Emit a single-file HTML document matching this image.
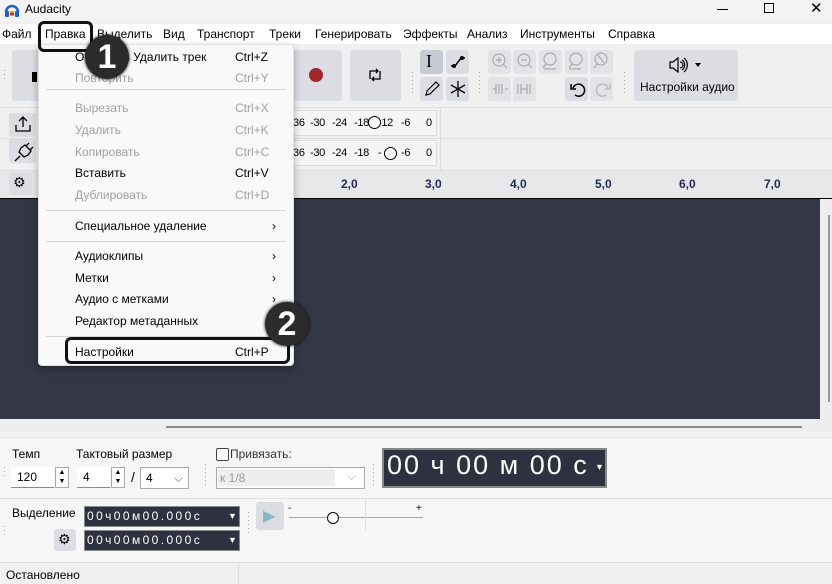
<!DOCTYPE html>
<html><head><meta charset="utf-8"><style>
*{margin:0;padding:0;box-sizing:border-box}
body{width:832px;height:584px;overflow:hidden;background:#f0f0f0;font-family:"Segoe UI","Liberation Sans","DejaVu Sans",sans-serif;font-size:12px;color:#000;position:relative}
.a{position:absolute}
.btn{position:absolute;background:#dcdde2;border-radius:3px}
.mi{position:absolute;left:75px;font-size:12px;color:#000}
.sc{position:absolute;left:235px;font-size:12px}
.dis{color:#a0a0a0}
.sep{position:absolute;left:46px;width:240px;height:1px;background:#d8d8d8}
.arr{position:absolute;left:272px;font-size:12px}
.grip{position:absolute;width:4px;color:#999;font-size:9px;line-height:4px}
.dark{background:#2e3140;color:#fff;border:1px solid #888}
.m{position:absolute;font-size:11px;letter-spacing:-.3px}
</style></head><body>
<!-- title bar -->
<div class="a" style="left:0;top:0;width:832px;height:22px;background:#f3f3f3"></div>
<svg class="a" style="left:4px;top:2px" width="16" height="16"><path d="M2 10 A6 6 0 0 1 14 10" stroke="#1f5fcf" stroke-width="2.5" fill="none"/><rect x="1" y="9" width="4" height="6" rx="1" fill="#1f5fcf"/><rect x="11" y="9" width="4" height="6" rx="1" fill="#1f5fcf"/><rect x="6" y="9" width="4" height="5" fill="#f5a000"/><rect x="6" y="11" width="4" height="2" fill="#e02020"/></svg>
<div class="a" style="left:25px;top:2px;font-size:12px">Audacity</div>
<div class="a" style="left:717px;top:9px;width:11px;height:1px;background:#000"></div>
<div class="a" style="left:764px;top:3px;width:10px;height:10px;border:1px solid #000"></div>
<div class="a" style="left:810px;top:-1px;font-size:15px">✕</div>
<!-- menu bar -->
<div class="a" style="left:0;top:24px;width:832px;height:20px;background:#fff"></div>
<div class="a" style="left:2px;top:27px">Файл</div>
<div class="a" style="left:45px;top:27px">Правка</div>
<div class="a" style="left:97px;top:27px">Выделить</div>
<div class="a" style="left:163px;top:27px">Вид</div>
<div class="a" style="left:197px;top:27px">Транспорт</div>
<div class="a" style="left:269px;top:27px">Треки</div>
<div class="a" style="left:315px;top:27px">Генерировать</div>
<div class="a" style="left:403px;top:27px">Эффекты</div>
<div class="a" style="left:467px;top:27px">Анализ</div>
<div class="a" style="left:520px;top:27px">Инструменты</div>
<div class="a" style="left:608px;top:27px">Справка</div>
<!-- toolbar -->
<div class="grip" style="left:3px;top:68px">·<br>·<br>·</div>
<div class="btn" style="left:12px;top:50px;width:30px;height:51px"></div>
<div class="a" style="left:32px;top:72px;width:5px;height:10px;background:#000"></div>
<div class="btn" style="left:290px;top:50px;width:52px;height:51px"></div>
<div class="a" style="left:309px;top:68px;width:14px;height:14px;border-radius:50%;background:#a0262a"></div>
<div class="btn" style="left:350px;top:50px;width:51px;height:51px"></div>
<svg class="a" style="left:367px;top:67px" width="16" height="16" fill="none" stroke="#000" stroke-width="1.3"><path d="M3 12V4h8M9 2l2 2-2 2M13 4v8H5M7 14l-2-2 2-2"/></svg>
<div class="grip" style="left:411px;top:70px">· ·<br>· ·<br>· ·</div>
<div class="btn" style="left:420px;top:50px;width:23px;height:24px;background:#c8cad3"></div>
<div class="a" style="left:426px;top:51px;font-size:18px;font-family:'Liberation Serif'">I</div>
<div class="btn" style="left:446px;top:50px;width:23px;height:24px"></div>
<svg class="a" style="left:448px;top:53px" width="20" height="18"><path d="M3 13h4l6-8h4" stroke="#000" fill="none" stroke-width="1.5"/><circle cx="6" cy="13" r="2"/><circle cx="14" cy="5" r="2"/></svg>
<div class="btn" style="left:420px;top:77px;width:23px;height:24px"></div>
<svg class="a" style="left:424px;top:80px" width="16" height="17" fill="none" stroke="#000" stroke-width="1.2"><path d="M2 15l1-4 9-9 3 3-9 9z"/></svg>
<div class="btn" style="left:446px;top:77px;width:23px;height:24px"></div>
<svg class="a" style="left:449px;top:80px" width="18" height="18" stroke="#000" stroke-width="1.3"><path d="M9 1v16M2 5l14 8M16 5L2 13"/></svg>
<div class="grip" style="left:478px;top:70px">· ·<br>· ·<br>· ·</div>
<div class="btn" style="left:488px;top:50px;width:23px;height:24px;opacity:.7"></div>
<div class="btn" style="left:513px;top:50px;width:23px;height:24px;opacity:.7"></div>
<div class="btn" style="left:539px;top:50px;width:23px;height:24px;opacity:.7"></div>
<div class="btn" style="left:565px;top:50px;width:23px;height:24px;opacity:.7"></div>
<div class="btn" style="left:590px;top:50px;width:23px;height:24px;opacity:.7"></div>
<div class="btn" style="left:488px;top:77px;width:23px;height:24px;opacity:.7"></div>
<div class="btn" style="left:513px;top:77px;width:23px;height:24px;opacity:.7"></div>
<div class="btn" style="left:565px;top:77px;width:23px;height:24px"></div>
<div class="btn" style="left:590px;top:77px;width:23px;height:24px;opacity:.7"></div>
<svg class="a" style="left:488px;top:50px" width="126" height="24" fill="none" stroke="#aaa" stroke-width="1.2">
<circle cx="11" cy="10" r="6"/><path d="M15 14l4 4M8 10h6M11 7v6"/>
<circle cx="36" cy="10" r="6"/><path d="M40 14l4 4M33 10h6"/>
<circle cx="62" cy="9" r="6"/><path d="M58 14l-3 4M56 19h12"/>
<circle cx="88" cy="9" r="6"/><path d="M84 14l-3 4M81 19h12"/>
<circle cx="113" cy="9" r="6"/><path d="M109 14l-3 4M110 5l6 8"/>
</svg>
<svg class="a" style="left:488px;top:77px" width="50" height="24" fill="none" stroke="#aaa" stroke-width="1.2"><path d="M5 12h3M8 7v10M11 7v10M14 7v10M17 12h3M30 7v10M33 7v10M33 12h6M39 7v10M42 7v10"/></svg>
<svg class="a" style="left:569px;top:80px" width="18" height="18" fill="none" stroke="#000" stroke-width="1.5"><path d="M4 8a6 6 0 1 1 2 7"/><path d="M2 4v5h5" /></svg>
<svg class="a" style="left:594px;top:80px" width="18" height="18" fill="none" stroke="#bbb" stroke-width="1.5"><path d="M14 8a6 6 0 1 0-2 7"/><path d="M16 4v5h-5"/></svg>
<div class="grip" style="left:623px;top:70px">· ·<br>· ·<br>· ·</div>
<div class="btn" style="left:634px;top:50px;width:104px;height:51px"></div>
<svg class="a" style="left:668px;top:56px" width="36" height="18" fill="none" stroke="#000" stroke-width="1.2"><path d="M2 6h3l5-4v14l-5-4H2z"/><path d="M12 6a3 3 0 0 1 0 6M14 4a6 6 0 0 1 0 10M16 2a9 9 0 0 1 0 14"/><path d="M27 7h6l-3 4z" fill="#000" stroke="none"/></svg>
<div class="a" style="left:640px;top:80px;font-size:12px">Настройки аудио</div>
<div class="a" style="left:0;top:107px;width:832px;height:1px;background:#ddd"></div>
<!-- meters -->
<div class="grip" style="left:8px;top:136px">·<br>·<br>·</div>
<div class="btn" style="left:9px;top:113px;width:27px;height:24px"></div>
<svg class="a" style="left:13px;top:114px" width="20" height="20" fill="none" stroke="#000" stroke-width="1.3"><path d="M10 13V3M6 7l4-4 4 4M3 11v6h14v-6"/></svg>
<div class="btn" style="left:9px;top:139px;width:27px;height:24px"></div>
<svg class="a" style="left:13px;top:141px" width="22" height="22" fill="none" stroke="#000" stroke-width="1.3"><path d="M2 20l5-5M6 11l5 5 4-2 3-4-6-6-4 3zM13 5l3-3M17 9l3-3"/></svg>
<div class="a" style="left:293px;top:110px;width:144px;height:26px;border:1px solid #ddd;background:#f5f5f5"></div>
<div class="a" style="left:293px;top:140px;width:144px;height:26px;border:1px solid #ddd;background:#f5f5f5"></div>
<div class="m" style="left:293px;top:117px">36</div><div class="m" style="left:310px;top:117px">-30</div><div class="m" style="left:332px;top:117px">-24</div><div class="m" style="left:354px;top:117px">-18</div><div class="m" style="left:378px;top:117px">-12</div><div class="m" style="left:401px;top:117px">-6</div><div class="m" style="left:426px;top:117px">0</div>
<div class="m" style="left:293px;top:147px">36</div><div class="m" style="left:310px;top:147px">-30</div><div class="m" style="left:332px;top:147px">-24</div><div class="m" style="left:354px;top:147px">-18</div><div class="m" style="left:378px;top:147px">-</div><div class="m" style="left:401px;top:147px">-6</div><div class="m" style="left:426px;top:147px">0</div>
<div class="a" style="left:368px;top:116px;width:13px;height:13px;border-radius:50%;border:1px solid #000;background:#fff"></div>
<div class="a" style="left:384px;top:147px;width:13px;height:13px;border-radius:50%;border:1px solid #000;background:#fff"></div>
<div class="a" style="left:440px;top:108px;width:1px;height:62px;background:#ddd"></div>
<div class="a" style="left:0;top:138px;width:832px;height:1px;background:#ddd"></div>
<!-- ruler -->
<div class="a" style="left:0;top:170px;width:832px;height:29px;background:#e8e8ea;border-top:1px solid #ddd"></div>
<div class="btn" style="left:9px;top:172px;width:23px;height:23px"></div>
<div class="a" style="left:13px;top:174px;font-size:14px">⚙</div>
<div class="a" style="left:0;top:198px;width:832px;height:1px;background:#000"></div>
<div class="a" style="left:341px;top:177px;font-size:12px;font-weight:bold;color:#1a2a5a">2,0</div>
<div class="a" style="left:425px;top:177px;font-size:12px;font-weight:bold;color:#1a2a5a">3,0</div>
<div class="a" style="left:510px;top:177px;font-size:12px;font-weight:bold;color:#1a2a5a">4,0</div>
<div class="a" style="left:595px;top:177px;font-size:12px;font-weight:bold;color:#1a2a5a">5,0</div>
<div class="a" style="left:679px;top:177px;font-size:12px;font-weight:bold;color:#1a2a5a">6,0</div>
<div class="a" style="left:764px;top:177px;font-size:12px;font-weight:bold;color:#1a2a5a">7,0</div>
<!-- track area -->
<div class="a" style="left:0;top:199px;width:820px;height:220px;background:#343746"></div>
<div class="a" style="left:820px;top:199px;width:12px;height:233px;background:#eee"></div>
<div class="a" style="left:828px;top:215px;width:2px;height:187px;background:#999"></div>
<div class="a" style="left:0;top:419px;width:820px;height:13px;background:#eee"></div>
<div class="a" style="left:166px;top:426px;width:636px;height:2px;background:#888"></div>
<!-- bottom toolbars -->
<div class="a" style="left:0;top:437px;width:832px;height:1px;background:#e6e6e6"></div>
<div class="a" style="left:0;top:438px;width:832px;height:124px;background:#f6f6f6"></div>
<div class="grip" style="left:3px;top:465px">·<br>·<br>·</div>
<div class="a" style="left:12px;top:447px">Темп</div>
<div class="a" style="left:76px;top:447px">Тактовый размер</div>
<div class="a" style="left:11px;top:467px;width:43px;height:21px;background:#fff;border-bottom:1px solid #888;padding:3px 6px">120</div>
<div class="a" style="left:55px;top:467px;width:14px;height:21px;border:1px solid #aaa;background:#fff;font-size:7px;text-align:center;line-height:9px">▲<br>▼</div>
<div class="a" style="left:77px;top:467px;width:33px;height:21px;background:#fff;border-bottom:1px solid #888;padding:3px 6px">4</div>
<div class="a" style="left:111px;top:467px;width:14px;height:21px;border:1px solid #aaa;background:#fff;font-size:7px;text-align:center;line-height:9px">▲<br>▼</div>
<div class="a" style="left:131px;top:469px;font-size:14px">/</div>
<div class="a" style="left:140px;top:467px;width:49px;height:22px;background:#fff;border:1px solid #aaa;padding:3px 5px">4<span style="position:absolute;right:5px;color:#777">⌵</span></div>
<div class="grip" style="left:204px;top:462px">· ·<br>· ·<br>· ·</div>
<div class="a" style="left:216px;top:448px;width:13px;height:13px;border:1px solid #444;border-radius:2px;background:#fff"></div>
<div class="a" style="left:230px;top:447px;color:#333">Привязать:</div>
<div class="a" style="left:216px;top:467px;width:149px;height:22px;border:1px solid #aaa;background:#fff"></div>
<div class="a" style="left:218px;top:469px;width:117px;height:17px;background:#eee;color:#999;padding:2px 2px">к 1/8</div>
<div class="a" style="left:347px;top:469px;color:#aaa">⌵</div>
<div class="grip" style="left:372px;top:462px">· ·<br>· ·<br>· ·</div>
<div class="a dark" style="left:382px;top:448px;width:225px;height:40px;border:2px solid #888"></div>
<div class="a" style="left:387px;top:450px;font-size:27px;color:#fff;letter-spacing:2px;font-family:'Liberation Sans'">00 ч 00 м 00 с</div>
<div class="a" style="left:595px;top:462px;color:#fff;font-size:9px">▼</div>
<div class="a" style="left:0;top:498px;width:832px;height:1px;background:#e0e0e0"></div>
<div class="grip" style="left:3px;top:524px">·<br>·<br>·</div>
<div class="a" style="left:12px;top:506px">Выделение</div>
<div class="a dark" style="left:84px;top:506px;width:156px;height:21px"></div>
<div class="a" style="left:87px;top:509px;font-size:12px;color:#fff;letter-spacing:2.4px">00ч00м00.000с</div>
<div class="a" style="left:228px;top:511px;color:#fff;font-size:9px">▼</div>
<div class="a dark" style="left:84px;top:530px;width:156px;height:21px"></div>
<div class="a" style="left:87px;top:533px;font-size:12px;color:#fff;letter-spacing:2.4px">00ч00м00.000с</div>
<div class="a" style="left:228px;top:535px;color:#fff;font-size:9px">▼</div>
<div class="btn" style="left:54px;top:529px;width:22px;height:22px"></div>
<div class="a" style="left:58px;top:531px;font-size:14px">⚙</div>
<div class="grip" style="left:247px;top:510px">· ·<br>· ·<br>· ·</div>
<div class="btn" style="left:256px;top:502px;width:28px;height:28px"></div>
<div class="a" style="left:263px;top:506px;color:#86b6c8;font-size:16px">▶</div>
<div class="a" style="left:289px;top:517px;width:134px;height:1px;background:#9ab"></div>
<div class="a" style="left:288px;top:503px;font-size:10px">-</div>
<div class="a" style="left:416px;top:503px;font-size:10px">+</div>
<div class="a" style="left:327px;top:512px;width:12px;height:12px;border-radius:50%;border:1px solid #000;background:#fff"></div>
<div class="a" style="left:365px;top:498px;width:1px;height:32px;background:#ddd"></div>
<!-- status -->
<div class="a" style="left:0;top:562px;width:832px;height:22px;background:#f0f0f0;border-top:1px solid #ddd"></div>
<div class="a" style="left:238px;top:563px;width:1px;height:21px;background:#ddd"></div>
<div class="a" style="left:6px;top:568px">Остановлено</div>
<!-- dropdown menu -->
<div class="a" style="left:38px;top:44px;width:256px;height:322px;background:#f9f9f9;border:1px solid #e0e0e0;border-radius:4px;box-shadow:0 3px 8px rgba(0,0,0,.3)"></div>
<div class="mi" style="top:50px">Отменить Удалить трек</div><div class="sc" style="top:50px">Ctrl+Z</div>
<div class="mi dis" style="top:71px">Повторить</div><div class="sc dis" style="top:71px">Ctrl+Y</div>
<div class="sep" style="top:89px"></div>
<div class="mi dis" style="top:101px">Вырезать</div><div class="sc dis" style="top:101px">Ctrl+X</div>
<div class="mi dis" style="top:123px">Удалить</div><div class="sc dis" style="top:123px">Ctrl+K</div>
<div class="mi dis" style="top:145px">Копировать</div><div class="sc dis" style="top:145px">Ctrl+C</div>
<div class="mi" style="top:166px">Вставить</div><div class="sc" style="top:166px">Ctrl+V</div>
<div class="mi dis" style="top:188px">Дублировать</div><div class="sc dis" style="top:188px">Ctrl+D</div>
<div class="sep" style="top:210px"></div>
<div class="mi" style="top:219px">Специальное удаление</div><div class="arr" style="top:219px">›</div>
<div class="sep" style="top:241px"></div>
<div class="mi" style="top:249px">Аудиоклипы</div><div class="arr" style="top:249px">›</div>
<div class="mi" style="top:271px">Метки</div><div class="arr" style="top:271px">›</div>
<div class="mi" style="top:292px">Аудио с метками</div><div class="arr" style="top:292px">›</div>
<div class="mi" style="top:314px">Редактор метаданных</div>
<div class="sep" style="top:336px"></div>
<div class="mi" style="top:345px">Настройки</div><div class="sc" style="top:345px">Ctrl+P</div>
<!-- annotations -->
<div class="a" style="left:38px;top:21px;width:55px;height:31px;border:3px solid #111;border-radius:6px"></div>
<div class="a" style="left:85px;top:35px;width:44px;height:44px;border-radius:50%;background:#2b2b2b;box-shadow:0 0 3px #000;color:#fff;font:bold 34px/44px 'Liberation Sans';text-align:center">1</div>
<div class="a" style="left:65px;top:337px;width:225px;height:27px;border:3px solid #111;border-radius:6px"></div>
<div class="a" style="left:265px;top:302px;width:44px;height:44px;border-radius:50%;background:#2b2b2b;box-shadow:0 0 3px #000;color:#fff;font:bold 34px/44px 'Liberation Sans';text-align:center">2</div>
</body></html>
